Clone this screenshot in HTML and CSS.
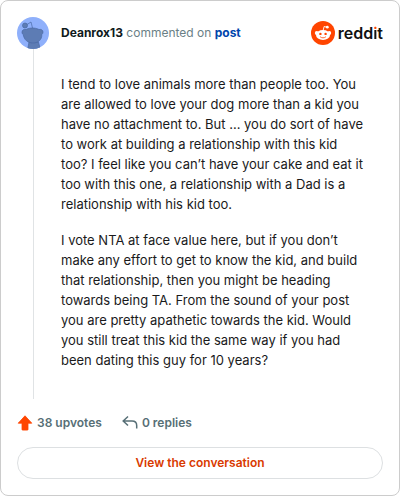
FILE: index.html
```
<!DOCTYPE html>
<html lang="en">
<head>
    <meta charset="UTF-8">
    <meta name="viewport" content="width=device-width, initial-scale=1.0">
    <title>Reddit comment</title>
    <link rel="stylesheet" href="styles.css">
</head>
<body>
    <article class="card">
        <header class="header">
            <svg class="avatar" viewBox="0 0 32 32" aria-hidden="true">
                <defs>
                    <clipPath id="avatar-clip"><circle cx="16" cy="16" r="16"/></clipPath>
                </defs>
                <g clip-path="url(#avatar-clip)">
                    <rect width="32" height="32" fill="#8fb0fb"/>
                    <g fill="#5d7cb4" stroke="#4a6aa5" stroke-width="0.7">
                        <path d="M15.500 11l-1.500-6-4 2.500" fill="none"/>
                        <circle cx="8" cy="8.500" r="2.500"/>
                        <path d="M12 25h9.500l2 8H10.500z"/>
                        <path d="M5 15c0-2 2-3 4-2.500 4-2 9-2 13 0 2-.5 4 .5 4 2.500 0 1-.4 2-1.200 2.500C25 23 21 26 16 26S7 23 6.200 17.500C5.300 17 5 16 5 15z"/>
                    </g>
                </g>
            </svg>
            <p class="byline"><strong class="author">Deanrox13</strong> commented on <a href="#" class="post-link">post</a></p>
            <a href="#" class="logo" aria-label="reddit">
                <svg class="logo-icon" viewBox="0 0 24 24" aria-hidden="true">
                    <circle cx="12" cy="12" r="12" fill="#ff4500"/>
                    <path d="M12 10l1.100-4.500 3.400.8" fill="none" stroke="#fff" stroke-width="0.9" stroke-linejoin="round"/>
                    <g fill="#fff">
                        <circle cx="16.300" cy="6.200" r="1.400"/>
                        <circle cx="5.700" cy="12" r="1.900"/>
                        <circle cx="18.300" cy="12" r="1.900"/>
                        <ellipse cx="12" cy="14" rx="7" ry="5"/>
                    </g>
                    <g fill="#ff4500">
                        <circle cx="9.400" cy="12.900" r="1.200"/>
                        <circle cx="14.600" cy="12.900" r="1.200"/>
                    </g>
                    <path d="M9.400 16c1.400 1.200 3.800 1.200 5.200 0" fill="none" stroke="#ff4500" stroke-width="0.8" stroke-linecap="round"/>
                </svg>
                <span class="wordmark">redd<span class="dot-i">i</span>t</span>
            </a>
        </header>

        <div class="comment">
            <p>I tend to love animals more than people too. You are allowed to love your dog more than a kid you have no attachment to. But ... you do sort of have to work at building a relationship with this kid too? I feel like you can’t have your cake and eat it too with this one, a relationship with a Dad is a relationship with his kid too.</p>
            <p>I vote NTA at face value here, but if you don’t make any effort to get to know the kid, and build that relationship, then you might be heading towards being TA. From the sound of your post you are pretty apathetic towards the kid. Would you still treat this kid the same way if you had been dating this guy for 10 years?</p>
        </div>

        <footer class="footer">
            <div class="stats">
                <span class="stat">
                    <svg class="stat-icon" viewBox="0 0 16 16" aria-hidden="true">
                        <path d="M8 .8L14.800 8.200H11V14.500a.6.600 0 0 1-.6.600H5.600a.6.600 0 0 1-.6-.6V8.200H1.200z" fill="#ff4500" stroke="#ff4500" stroke-width="0.8" stroke-linejoin="round"/>
                    </svg>
                    38 upvotes
                </span>
                <span class="stat">
                    <svg class="stat-icon" viewBox="0 0 16 16" aria-hidden="true">
                        <path d="M6 1.500L1.200 6 6 10.500M1.500 6h8.500c3 0 4.700 1.800 4.700 4.500v3" fill="none" stroke="#576f76" stroke-width="1.500"/>
                    </svg>
                    0 replies
                </span>
            </div>
            <a href="#" class="view-button">View the conversation</a>
        </footer>
    </article>
</body>
</html>
```

FILE: styles.css
```
* {
    box-sizing: border-box;
}

body {
    margin: 0;
    background-color: #fff;
    color: #1a1a1b;
    font-family: Inter, "Liberation Sans", sans-serif;
    font-size: 13px;
    line-height: 20px;
}

p {
    margin: 0;
}

a {
    text-decoration: none;
}

.card {
    padding: 16px;
    border: 1px solid #ccc;
    border-radius: 8px;
}

.header {
    display: flex;
    align-items: center;
}

.avatar {
    width: 32px;
    height: 32px;
    margin-right: 12px;
}

.byline {
    flex: 1;
    color: #6a7f86;
    font-size: 12px;
}

.author {
    color: #0f1a1c;
    font-weight: 700;
}

.post-link {
    color: #0045ac;
    font-weight: 700;
}

.logo {
    display: flex;
    align-items: center;
    gap: 3px;
    color: #111;
}

.logo-icon {
    width: 24px;
    height: 24px;
}

.wordmark {
    font-size: 16px;
    font-weight: 600;
}

/* orange dot, dark stem */
.dot-i {
    background: linear-gradient(#ff4500 33%, #111 33%);
    -webkit-background-clip: text;
    background-clip: text;
    color: transparent;
}

.comment {
    display: flex;
    flex-direction: column;
    gap: 16px;
    margin-left: 16px;
    padding: 25px 17px 29px 27px;
    border-left: 1px solid #e0e3e5;
}

.footer {
    padding-top: 14px;
}

.stats {
    display: flex;
    gap: 20px;
    margin-bottom: 14px;
    color: #576f76;
    font-size: 12px;
    font-weight: 600;
}

.stat {
    display: flex;
    align-items: center;
    gap: 4px;
}

.stat-icon {
    width: 16px;
    height: 16px;
}

.view-button {
    display: block;
    padding: 5px 16px;
    border: 1px solid #dde0e2;
    border-radius: 16px;
    color: #d93a00;
    font-size: 12px;
    font-weight: 600;
    text-align: center;
}
```
